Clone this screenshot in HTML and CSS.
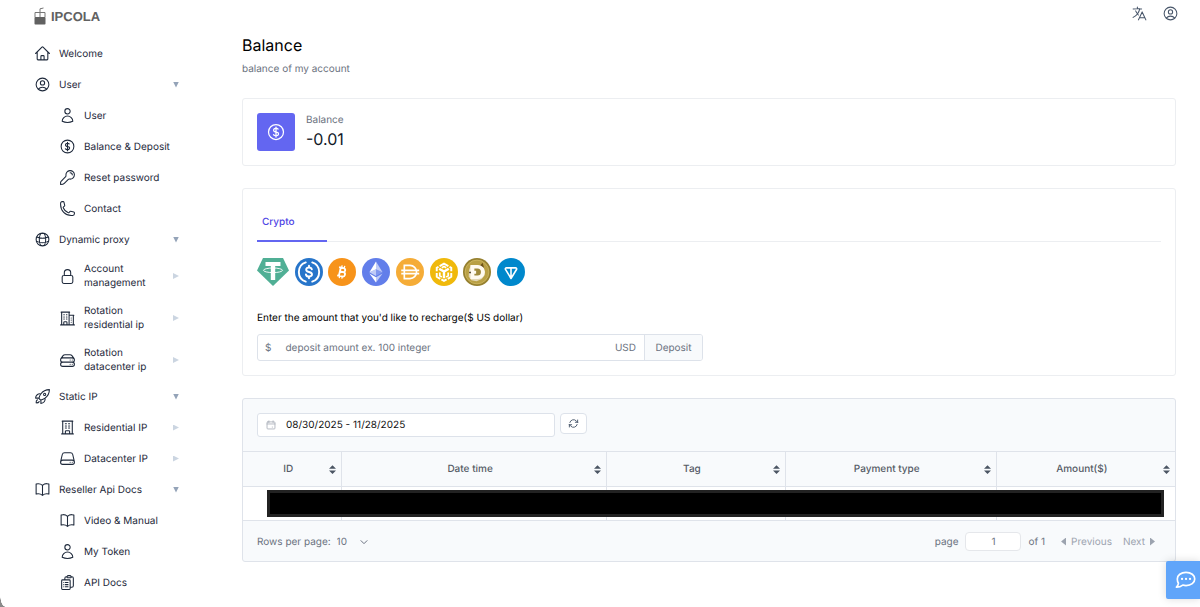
FILE: index.html
```html
<!DOCTYPE html>
<html lang="en">
<head>
  <meta charset="UTF-8" />
  <meta name="viewport" content="width=device-width, initial-scale=1" />
  <title>IPCOLA - Balance</title>
  <link rel="stylesheet" href="styles.css">
</head>
<body>
  <!-- icon set -->
  <svg class="sprite" aria-hidden="true">
    <symbol id="i-home" viewBox="0 0 24 24"><path d="M2.25 12l8.954-8.955c.44-.439 1.152-.439 1.591 0L21.75 12M4.5 9.75v10.125c0 .621.504 1.125 1.125 1.125H9.75v-4.875c0-.621.504-1.125 1.125-1.125h2.25c.621 0 1.125.504 1.125 1.125V21h4.125c.621 0 1.125-.504 1.125-1.125V9.75M8.25 21h8.25"/></symbol>
    <symbol id="i-user-circle" viewBox="0 0 24 24"><path d="M17.982 18.725A7.488 7.488 0 0012 15.75a7.488 7.488 0 00-5.982 2.975m11.963 0a9 9 0 10-11.963 0m11.963 0A8.966 8.966 0 0112 21a8.966 8.966 0 01-5.982-2.275M15 9.75a3 3 0 11-6 0 3 3 0 016 0z"/></symbol>
    <symbol id="i-user" viewBox="0 0 24 24"><path d="M15.75 6a3.75 3.75 0 11-7.5 0 3.75 3.75 0 017.5 0zM4.501 20.118a7.5 7.5 0 0114.998 0A17.933 17.933 0 0112 21.75c-2.676 0-5.216-.584-7.499-1.632z"/></symbol>
    <symbol id="i-dollar" viewBox="0 0 24 24"><path d="M12 6v12m-3-2.818l.879.659c1.171.879 3.07.879 4.242 0 1.172-.879 1.172-2.303 0-3.182C13.536 12.219 12.768 12 12 12c-.725 0-1.45-.22-2.003-.659-1.106-.879-1.106-2.303 0-3.182s2.9-.879 4.006 0l.415.33M21 12a9 9 0 11-18 0 9 9 0 0118 0z"/></symbol>
    <symbol id="i-key" viewBox="0 0 24 24"><path d="M15.750 5.250a3 3 0 013 3m3 0a6 6 0 01-7.029 5.912c-.563-.097-1.159.026-1.563.43L7.500 20.250c-1.200 1.200-3 1.500-5.250 1.500v-2.818c0-.597.237-1.170.659-1.591l6.499-6.499c.404-.404.527-1 .43-1.563A6 6 0 1121.750 8.250z"/></symbol>
    <symbol id="i-phone" viewBox="0 0 24 24"><path d="M2.25 6.75c0 8.284 6.716 15 15 15h2.25a2.25 2.25 0 002.25-2.25v-1.372c0-.516-.351-.966-.852-1.091l-4.423-1.106c-.44-.11-.902.055-1.173.417l-.97 1.293c-.282.376-.769.542-1.21.38a12.035 12.035 0 01-7.143-7.143c-.162-.441.004-.928.38-1.21l1.293-.97c.363-.271.527-.734.417-1.173L6.963 3.102a1.125 1.125 0 00-1.091-.852H4.5A2.25 2.25 0 002.25 4.5v2.25z"/></symbol>
    <symbol id="i-globe" viewBox="0 0 24 24"><path d="M12 3a9 9 0 100 18 9 9 0 000-18zm0 0c-2.5 0-4.5 4-4.5 9s2 9 4.5 9 4.5-4 4.5-9-2-9-4.5-9zM3.800 8.600c5 2 11.400 2 16.400 0M3.300 14.300c5.400 2.800 12 2.800 17.400 0"/></symbol>
    <symbol id="i-lock" viewBox="0 0 24 24"><path d="M16.5 10.5V6.75a4.5 4.5 0 10-9 0v3.75m-.75 11.25h10.5a2.25 2.25 0 002.25-2.25v-6.75a2.25 2.25 0 00-2.25-2.25H6.75a2.25 2.25 0 00-2.25 2.25v6.75a2.25 2.25 0 002.25 2.25z"/></symbol>
    <symbol id="i-buildings" viewBox="0 0 24 24"><path d="M2.25 21h19.5m-18-18v18m10.5-18v18m6-13.5V21M6.75 6.75h.75m-.75 3h.75m-.75 3h.75m3-6h.75m-.75 3h.75m-.75 3h.75M6.75 21v-3.375c0-.621.504-1.125 1.125-1.125h2.25c.621 0 1.125.504 1.125 1.125V21M3 3h12m-.75 4.5H21m-3.75 3.75h.008v.008h-.008v-.008zm0 3h.008v.008h-.008v-.008zm0 3h.008v.008h-.008v-.008z"/></symbol>
    <symbol id="i-building" viewBox="0 0 24 24"><path d="M3.75 21h16.5M4.5 3h15M5.25 3v18m13.5-18v18M9 6.75h1.5m-1.5 3h1.5m-1.5 3h1.5m3-6H15m-1.5 3H15m-1.5 3H15M9 21v-3.375c0-.621.504-1.125 1.125-1.125h3.75c.621 0 1.125.504 1.125 1.125V21"/></symbol>
    <symbol id="i-servers" viewBox="0 0 24 24"><path d="M5.25 14.25h13.5m-13.5 0a3 3 0 01-3-3m3 3a3 3 0 100 6h13.5a3 3 0 100-6m-16.5-3a3 3 0 013-3h13.5a3 3 0 013 3m-19.5 0a4.5 4.5 0 01.9-2.7L5.737 5.1a3.375 3.375 0 012.7-1.35h7.126c1.062 0 2.062.5 2.7 1.35l2.587 3.45a4.5 4.5 0 01.9 2.7m0 0a3 3 0 01-3 3m0 3h.008v.008h-.008v-.008zm0-6h.008v.008h-.008v-.008zm-3 6h.008v.008h-.008v-.008zm0-6h.008v.008h-.008v-.008z"/></symbol>
    <symbol id="i-server" viewBox="0 0 24 24"><path d="M21.75 17.25v-.228a4.5 4.5 0 00-.12-1.03l-2.268-9.64a3.375 3.375 0 00-3.285-2.602H7.923a3.375 3.375 0 00-3.285 2.602l-2.268 9.64a4.5 4.5 0 00-.12 1.03v.228m19.5 0a3 3 0 01-3 3H5.25a3 3 0 01-3-3m19.5 0a3 3 0 00-3-3H5.25a3 3 0 00-3 3m16.5 0h.008v.008h-.008v-.008zm-3 0h.008v.008h-.008v-.008z"/></symbol>
    <symbol id="i-rocket" viewBox="0 0 24 24"><path d="M15.59 14.37a6 6 0 01-5.84 7.38v-4.8m5.84-2.58a14.98 14.98 0 006.16-12.12A14.98 14.98 0 009.631 8.41m5.96 5.96a14.926 14.926 0 01-5.841 2.58m-.119-8.54a6 6 0 00-7.381 5.84h4.8m2.581-5.84a14.927 14.927 0 00-2.58 5.84m2.699 2.7c-.103.021-.207.041-.311.06a15.09 15.09 0 01-2.448-2.448 14.9 14.9 0 01.06-.312m-2.24 2.39a4.493 4.493 0 00-1.757 4.306 4.493 4.493 0 004.306-1.758M16.5 9a1.5 1.5 0 11-3 0 1.5 1.5 0 013 0z"/></symbol>
    <symbol id="i-book" viewBox="0 0 24 24"><path d="M12 6.042A8.967 8.967 0 006 3.75c-1.052 0-2.062.18-3 .512v14.25A8.987 8.987 0 016 18c2.305 0 4.408.867 6 2.292m0-14.25a8.966 8.966 0 016-2.292c1.052 0 2.062.18 3 .512v14.25A8.987 8.987 0 0018 18a8.967 8.967 0 00-6 2.292m0-14.25v14.25"/></symbol>
    <symbol id="i-clipboard" viewBox="0 0 24 24"><path d="M9 12h3.75M9 15h3.75M9 18h3.75m3 .75H18a2.25 2.25 0 002.25-2.25V6.108c0-1.135-.845-2.098-1.976-2.192a48.424 48.424 0 00-1.123-.08m-5.801 0c-.065.21-.1.433-.1.664 0 .414.336.75.75.75h4.5a.75.75 0 00.75-.75 2.25 2.25 0 00-.1-.664m-5.8 0A2.251 2.251 0 0113.5 2.25H15c1.012 0 1.867.668 2.15 1.586m-5.8 0c-.376.023-.75.05-1.124.08C9.095 4.01 8.25 4.973 8.25 6.108V8.25m0 0H4.875c-.621 0-1.125.504-1.125 1.125v11.25c0 .621.504 1.125 1.125 1.125h9.75c.621 0 1.125-.504 1.125-1.125V9.375c0-.621-.504-1.125-1.125-1.125H8.25zM6.75 12h.008v.008H6.75V12zm0 3h.008v.008H6.75V15zm0 3h.008v.008H6.75V18z"/></symbol>
    <symbol id="i-refresh" viewBox="0 0 24 24"><path d="M16.023 9.348h4.992v-.001M2.985 19.644v-4.992m0 0h4.992m-4.993 0l3.181 3.183a8.25 8.25 0 0013.803-3.7M4.031 9.865a8.25 8.25 0 0113.803-3.7l3.181 3.182m0-4.991v4.99"/></symbol>
    <symbol id="i-language" viewBox="0 0 24 24"><path d="M10.5 21l5.25-11.25L21 21m-9-3h7.5M3 5.621a48.474 48.474 0 016-.371m0 0c1.12 0 2.233.038 3.334.114M9 5.25V3m3.334 2.364C11.176 10.658 7.69 15.08 3 17.502m9.334-12.138c.896.061 1.785.147 2.666.257m-4.589 8.495a18.023 18.023 0 01-3.827-5.802"/></symbol>
    <symbol id="i-calendar" viewBox="0 0 24 24"><path d="M7 2v4M17 2v4M4.500 4.500h15a2 2 0 012 2V19.500a2 2 0 01-2 2h-15a2 2 0 01-2-2V6.500a2 2 0 012-2zM2.500 9.500h19M15 17h.5"/></symbol>
    <symbol id="i-chevron" viewBox="0 0 24 24"><path d="M3 8l9 9 9-9"/></symbol>
    <symbol id="i-sort" viewBox="0 0 8 10"><path d="M4 0l4 4H0zM0 6h8l-4 4z"/></symbol>
  </svg>

  <div class="layout">
    <aside class="sidebar">
      <a class="logo" href="#">
        <svg class="logo-mark" viewBox="0 0 12 18" aria-hidden="true">
          <path d="M1 10V5.500h10V10M6 10V1.800L9.500 1" fill="none" stroke="#777" stroke-width="1"/>
          <rect x="0.500" y="10" width="11" height="7.500" rx="0.800" fill="#616161"/>
        </svg>
        <span>IPCOLA</span>
      </a>

      <nav class="menu">
        <a class="menu-item" href="#"><svg class="icon"><use href="#i-home"/></svg><span>Welcome</span></a>

        <a class="menu-item" href="#"><svg class="icon"><use href="#i-user-circle"/></svg><span>User</span><i class="arrow-down"></i></a>
        <div class="submenu">
          <a class="menu-item" href="#"><svg class="icon"><use href="#i-user"/></svg><span>User</span></a>
          <a class="menu-item" href="#"><svg class="icon"><use href="#i-dollar"/></svg><span>Balance &amp; Deposit</span></a>
          <a class="menu-item" href="#"><svg class="icon"><use href="#i-key"/></svg><span>Reset password</span></a>
          <a class="menu-item" href="#"><svg class="icon"><use href="#i-phone"/></svg><span>Contact</span></a>
        </div>

        <a class="menu-item" href="#"><svg class="icon"><use href="#i-globe"/></svg><span>Dynamic proxy</span><i class="arrow-down"></i></a>
        <div class="submenu">
          <a class="menu-item" href="#"><svg class="icon"><use href="#i-lock"/></svg><span>Account management</span><i class="arrow-right"></i></a>
          <a class="menu-item" href="#"><svg class="icon"><use href="#i-buildings"/></svg><span>Rotation residential ip</span><i class="arrow-right"></i></a>
          <a class="menu-item" href="#"><svg class="icon"><use href="#i-servers"/></svg><span>Rotation datacenter ip</span><i class="arrow-right"></i></a>
        </div>

        <a class="menu-item" href="#"><svg class="icon"><use href="#i-rocket"/></svg><span>Static IP</span><i class="arrow-down"></i></a>
        <div class="submenu">
          <a class="menu-item" href="#"><svg class="icon"><use href="#i-building"/></svg><span>Residential IP</span><i class="arrow-right"></i></a>
          <a class="menu-item" href="#"><svg class="icon"><use href="#i-server"/></svg><span>Datacenter IP</span><i class="arrow-right"></i></a>
        </div>

        <a class="menu-item" href="#"><svg class="icon"><use href="#i-book"/></svg><span>Reseller Api Docs</span><i class="arrow-down"></i></a>
        <div class="submenu">
          <a class="menu-item" href="#"><svg class="icon"><use href="#i-book"/></svg><span>Video &amp; Manual</span></a>
          <a class="menu-item" href="#"><svg class="icon"><use href="#i-user"/></svg><span>My Token</span></a>
          <a class="menu-item" href="#"><svg class="icon"><use href="#i-clipboard"/></svg><span>API Docs</span></a>
        </div>
      </nav>
    </aside>

    <main class="content">
      <header class="topbar">
        <button type="button" class="icon-btn" aria-label="Language"><svg class="icon"><use href="#i-language"/></svg></button>
        <button type="button" class="icon-btn" aria-label="Account"><svg class="icon"><use href="#i-user-circle"/></svg></button>
      </header>

      <h1 class="page-title">Balance</h1>
      <p class="page-desc">balance of my account</p>

      <section class="card balance-card">
        <div class="balance-icon"><svg class="icon"><use href="#i-dollar"/></svg></div>
        <div>
          <div class="balance-label">Balance</div>
          <div class="balance-value">-0.01</div>
        </div>
      </section>

      <section class="card deposit-card">
        <div class="tabs">
          <button type="button" class="tab">Crypto</button>
        </div>

        <div class="coins">
          <!-- USDT -->
          <svg class="coin coin-wide" viewBox="0 0 32 28">
            <path d="M6 0h20l6 12.500L16 28 0 12.500z" fill="#50af95"/>
            <path d="M8.500 4h15v4h-5.300v14h-4.400V8H8.500z" fill="#fff"/>
            <ellipse cx="16" cy="12.300" rx="9.500" ry="2.300" fill="none" stroke="#fff" stroke-width="0.900"/>
          </svg>
          <!-- USDC -->
          <svg class="coin" viewBox="0 0 32 32">
            <circle cx="16" cy="16" r="16" fill="#2775ca"/>
            <g fill="none" stroke="#fff" stroke-width="2.200" stroke-linecap="round">
              <path d="M12.300 5a11.600 11.600 0 000 22M19.700 5a11.600 11.600 0 010 22"/>
              <path d="M19.200 13c-.3-1.400-1.400-2.100-3.200-2.100-1.900 0-3.200.9-3.200 2.400 0 3.600 6.600 1.800 6.600 5.400 0 1.500-1.300 2.500-3.400 2.500-2 0-3.200-.8-3.500-2.400M16 8.800v2M16 21.200v2"/>
            </g>
          </svg>
          <!-- BTC -->
          <svg class="coin" viewBox="0 0 32 32">
            <circle cx="16" cy="16" r="16" fill="#f7931a"/>
            <g transform="rotate(13 16 16)" fill="none" stroke="#fff" stroke-width="2.100">
              <path d="M11.500 11.200h5.300a2.300 2.300 0 010 4.700h-3.500M13.500 11v10M13.500 15.900h4a2.500 2.500 0 010 5h-6"/>
              <path d="M14.500 8.500v2.500M17.500 8.500v2.500M14.500 21v2.500M17.500 21v2.500" stroke-width="1.500"/>
            </g>
          </svg>
          <!-- ETH -->
          <svg class="coin" viewBox="0 0 32 32">
            <circle cx="16" cy="16" r="16" fill="#627eea"/>
            <g fill="#fff">
              <path fill-opacity=".6" d="M16 4v8.870l7.500 3.350z"/>
              <path d="M16 4L8.500 16.220l7.500-3.350z"/>
              <path fill-opacity=".6" d="M16 21.970v6.030l7.500-10.380z"/>
              <path d="M16 28v-6.030l-7.500-4.350z"/>
              <path fill-opacity=".2" d="M16 20.570l7.500-4.350-7.500-3.350z"/>
              <path fill-opacity=".6" d="M8.500 16.220l7.500 4.350v-7.700z"/>
            </g>
          </svg>
          <!-- DAI -->
          <svg class="coin" viewBox="0 0 32 32">
            <circle cx="16" cy="16" r="16" fill="#f5ac37"/>
            <path d="M9.500 8.500h6.500a7.500 7.500 0 010 15H9.500zM6 14.200h20.500M6 17.800h20.500" fill="none" stroke="#fff" stroke-width="1.900"/>
          </svg>
          <!-- BNB -->
          <svg class="coin" viewBox="0 0 32 32">
            <circle cx="16" cy="16" r="16" fill="#f0b90b"/>
            <g fill="none" stroke="#fff" stroke-width="2.200">
              <path d="M11 9.300L16 6.500l5 2.800M7.700 15v-3.800l2-1.200M24.300 15v-3.800l-2-1.200M7.700 17.200v4.300l4 2.300M24.300 17.200v4.300l-4 2.300M13 24.500l3 1.700 3-1.700"/>
              <path d="M10.500 12.300l5.500 3.200 5.500-3.200M16 15.500v7.500" stroke-width="2.800"/>
              <path d="M11.200 16.500v3.800l2.300 1.300M20.800 16.500v3.800l-2.300 1.300M13.500 11.200l2.500-1.400 2.500 1.400" stroke-width="2"/>
            </g>
          </svg>
          <!-- DOGE -->
          <svg class="coin" viewBox="0 0 32 32">
            <circle cx="16" cy="16" r="16" fill="#96802f"/>
            <circle cx="16" cy="16" r="13.600" fill="#b9a045" stroke="#d5be6a" stroke-width="0.800"/>
            <path d="M9 8.500l3.500 1 7-.5 4 2 1.500 5-.5 4-3 4-6 2.500-6-1L6.500 21 7 13z" fill="#e3d7b4"/>
            <path d="M19 9l3.500-3.500L24 11z" fill="#6f5318"/>
            <path d="M8.500 8h8.500a8 8 0 010 16H8.500v-5.500H7v-4h1.500z" fill="#fffaf0"/>
            <path d="M13 12h3.500a4 4 0 010 8H13v-2h2v-3.500h-2z" fill="#a08a3c"/>
            <circle cx="8" cy="16.500" r="1.100" fill="#4b3b1c"/>
          </svg>
          <!-- TON -->
          <svg class="coin" viewBox="0 0 32 32">
            <circle cx="16" cy="16" r="16" fill="#0088cc"/>
            <path d="M10.800 11.300h10.400c1 0 1.600 1 1.100 1.800L16 23.400 9.700 13.100c-.5-.8.1-1.800 1.100-1.800zM16 11.300v11.500" fill="none" stroke="#fff" stroke-width="1.800" stroke-linejoin="round"/>
          </svg>
        </div>

        <label class="deposit-label" for="amount">Enter the amount that you'd like to recharge($ US dollar)</label>
        <div class="input-group">
          <span class="prefix">$</span>
          <input type="text" id="amount" placeholder="deposit amount ex. 100 integer">
          <span class="suffix">USD</span>
          <button type="button" class="deposit-btn">Deposit</button>
        </div>
      </section>

      <section class="card table-card">
        <div class="toolbar">
          <div class="date-box">
            <svg class="icon"><use href="#i-calendar"/></svg>
            <input type="text" aria-label="Date range" value="08/30/2025 - 11/28/2025">
          </div>
          <button type="button" class="refresh-btn" aria-label="Refresh"><svg class="icon"><use href="#i-refresh"/></svg></button>
        </div>

        <div class="table-wrap">
          <table class="history">
            <colgroup>
              <col class="col-id"><col class="col-date"><col class="col-tag"><col class="col-type"><col class="col-amount">
            </colgroup>
            <thead>
              <tr>
                <th><div class="th"><span>ID</span><svg class="sort"><use href="#i-sort"/></svg></div></th>
                <th><div class="th"><span>Date time</span><svg class="sort"><use href="#i-sort"/></svg></div></th>
                <th><div class="th"><span>Tag</span><svg class="sort"><use href="#i-sort"/></svg></div></th>
                <th><div class="th"><span>Payment type</span><svg class="sort"><use href="#i-sort"/></svg></div></th>
                <th><div class="th"><span>Amount($)</span><svg class="sort"><use href="#i-sort"/></svg></div></th>
              </tr>
            </thead>
            <tbody>
              <tr><td></td><td></td><td></td><td></td><td></td></tr>
            </tbody>
          </table>
          <div class="row-mask"></div>
        </div>

        <div class="table-footer">
          <div class="rows">
            <label for="rows">Rows per page:</label>
            <div class="select-box">
              <select id="rows"><option>10</option><option>20</option><option>50</option></select>
              <svg class="icon"><use href="#i-chevron"/></svg>
            </div>
          </div>
          <div class="pager">
            <label for="page">page</label>
            <input type="text" id="page" value="1">
            <span class="total">of 1</span>
            <button type="button" class="pager-btn"><i class="tri-left"></i>Previous</button>
            <button type="button" class="pager-btn">Next<i class="tri-right"></i></button>
          </div>
        </div>
      </section>
    </main>
  </div>

  <button type="button" class="chat-btn" aria-label="Chat">
    <svg viewBox="0 0 20 17" aria-hidden="true">
      <path d="M10.500 1.200c4.800 0 8.300 2.800 8.300 6.300s-3.500 6.300-8.300 6.300c-1.200 0-2.200-.2-3.100-.5-1.500 1.200-3.400 2-6 2 1.100-1.100 1.700-2.300 1.900-3.700C2.500 10.500 2.200 9 2.200 7.500c0-3.500 3.500-6.300 8.300-6.300z" fill="none" stroke="#fff" stroke-width="1.600" stroke-linejoin="round"/>
      <path d="M6.700 7.500h.01M10.500 7.500h.01M14.300 7.500h.01" stroke="#fff" stroke-width="2.200" stroke-linecap="round"/>
    </svg>
  </button>
  <div class="window-corner"></div>
</body>
</html>
```

FILE: styles.css
```css
* {
  box-sizing: border-box;
  margin: 0;
  padding: 0;
}

body {
  font-family: Inter, sans-serif;
  font-size: 10px;
  line-height: 14px;
  color: #1e293b;
  background: #fff;
  text-rendering: geometricPrecision;
}

a {
  color: inherit;
  text-decoration: none;
}

button, input, select {
  font: inherit;
  color: inherit;
  background: none;
  border: none;
  outline: none;
  text-rendering: inherit;
}

button {
  cursor: pointer;
}

.sprite {
  display: none;
}

.icon {
  flex: none;
  width: 17px;
  height: 17px;
  fill: none;
  stroke: currentColor;
  stroke-width: 1.5;
  stroke-linecap: round;
  stroke-linejoin: round;
}

.layout {
  display: grid;
  grid-template-columns: 242px 1fr;
  min-height: 100vh;
}

/* sidebar */
.sidebar {
  padding: 6px 63px 8px 34px;
}

.logo {
  display: flex;
  align-items: center;
  gap: 5px;
  height: 20px;
  margin-bottom: 12px;
  font-family: "Liberation Sans", Arial, sans-serif;
  font-size: 13px;
  font-weight: bold;
  color: #616161;
}

.logo-mark {
  width: 12px;
  height: 18px;
}

.logo span {
  padding-top: 2px;
}

.menu-item {
  display: flex;
  align-items: center;
  gap: 8px;
  padding: 7px 0;
}

.menu-item span {
  flex: 1;
}

.submenu {
  padding-left: 25px;
}

.arrow-down,
.arrow-right {
  flex: none;
  width: 6px;
  height: 6px;
  background: #94a3b8;
  clip-path: polygon(0 0, 100% 0, 50% 100%);
}

.arrow-right {
  background: #cbd5e1;
  clip-path: polygon(0 0, 100% 50%, 0 100%);
}

/* content */
.content {
  padding: 5px 24px 24px 0;
}

.topbar {
  display: flex;
  justify-content: flex-end;
  gap: 14px;
  margin-right: -3px;
  color: #475569;
}

.icon-btn {
  display: flex;
}

.page-title {
  margin-top: 12px;
  font-size: 16px;
  font-weight: 400;
  line-height: 22px;
  color: #000;
}

.page-desc {
  margin: 6px 0 22px;
  color: #6b7280;
}

.card {
  border: 1px solid #eceef1;
  border-radius: 3px;
  margin-bottom: 22px;
}

.balance-card {
  display: flex;
  align-items: center;
  gap: 11px;
  padding: 14px;
}

.balance-icon {
  display: flex;
  align-items: center;
  justify-content: center;
  width: 38px;
  height: 38px;
  border-radius: 3px;
  background: #6366f1;
  color: #fff;
}

.balance-icon .icon {
  width: 20px;
  height: 20px;
}

.balance-label {
  color: #6b7280;
}

.balance-value {
  font-size: 16px;
  line-height: 24px;
  color: #111827;
}

.deposit-card {
  padding: 14px;
}

.tabs {
  border-bottom: 1px solid #eceef1;
  display: flex;
}

.tab {
  width: 70px;
  padding: 12px 5px 11px;
  margin-bottom: -1px;
  border-bottom: 2px solid #6366f1;
  text-align: left;
  font-weight: 500;
  color: #4f46e5;
}

.coins {
  display: flex;
  justify-content: space-between;
  width: 268px;
  margin: 16px 0 25px;
}

.coin {
  width: 28px;
  height: 28px;
}

.coin-wide {
  width: 32px;
}

.deposit-label {
  display: block;
  margin-bottom: 9px;
  color: #000;
}

.input-group {
  display: flex;
  align-items: center;
  width: 446px;
  max-width: 100%;
  height: 27px;
  border: 1px solid #dde2ea;
  border-radius: 3px;
  color: #6b7280;
  overflow: hidden;
}

.prefix {
  padding: 0 14px 0 7px;
}

.input-group input {
  flex: 1;
  min-width: 0;
  height: 100%;
}

.input-group input::placeholder {
  color: #6b7280;
  opacity: 1;
}

.suffix {
  padding: 0 8px;
}

.deposit-btn {
  width: 58px;
  height: 100%;
  border-left: 1px solid #dde2ea;
  background: #f8fafc;
}

/* table */
.table-card {
  border-color: #dfe3ea;
  background: #f8fafc;
}

.toolbar {
  display: flex;
  align-items: flex-start;
  gap: 5px;
  padding: 14px;
}

.date-box {
  display: flex;
  align-items: center;
  gap: 10px;
  width: 298px;
  height: 24px;
  padding: 0 8px;
  border: 1px solid #dde2ea;
  border-radius: 3px;
  background: #fff;
}

.date-box .icon {
  width: 10px;
  height: 10px;
  stroke-width: 2;
  color: #a8adb8;
}

.date-box input {
  flex: 1;
  min-width: 0;
  color: #111;
}

.refresh-btn {
  display: flex;
  align-items: center;
  justify-content: center;
  width: 27px;
  height: 21px;
  border: 1px solid #dde2ea;
  border-radius: 4px;
  background: #fff;
  color: #475569;
}

.refresh-btn .icon {
  width: 11px;
  height: 11px;
  stroke-width: 2;
}

.table-wrap {
  position: relative;
}

.history {
  width: 100%;
  table-layout: fixed;
  border-collapse: collapse;
}

.col-id { width: 10.6%; }
.col-date { width: 28.4%; }
.col-tag { width: 19.2%; }
.col-type { width: 22.6%; }
.col-amount { width: 19.2%; }

.history th,
.history td {
  height: 34px;
  border: 1px solid #dfe3ea;
}

.history th {
  height: 35px;
  font-weight: 500;
  color: #555b66;
}

.history td {
  background: #fff;
}

.history th:first-child,
.history td:first-child {
  border-left: none;
}

.history th:last-child,
.history td:last-child {
  border-right: none;
}

.th {
  display: flex;
  align-items: center;
  padding: 0 5px 0 4px;
}

.th span {
  flex: 1;
  text-align: center;
}

.sort {
  width: 7px;
  height: 9px;
  fill: #4b5563;
}

/* hidden row data */
.row-mask {
  position: absolute;
  left: 24px;
  right: 11px;
  bottom: 4px;
  height: 27px;
  border: 3px solid #222;
  background: #000;
}

.table-footer {
  display: flex;
  align-items: center;
  justify-content: space-between;
  padding: 11px 20px 10px 14px;
  color: #6b7280;
}

.rows,
.pager {
  display: flex;
  align-items: center;
}

.rows {
  gap: 6px;
}

.select-box {
  display: flex;
  align-items: center;
}

.select-box select {
  appearance: none;
  width: 31px;
  margin-right: -8px;
  padding-right: 8px;
}

.select-box .icon {
  width: 8px;
  height: 8px;
  stroke-width: 3;
  pointer-events: none;
}

.pager input {
  width: 56px;
  height: 19px;
  margin: 0 7px;
  border: 1px solid #e5e7eb;
  border-radius: 4px;
  background: #fff;
  text-align: center;
}

.total {
  margin-right: 16px;
}

.pager-btn {
  display: flex;
  align-items: center;
  gap: 5px;
  color: #9ca3af;
}

.pager-btn + .pager-btn {
  margin-left: 11px;
}

.tri-left,
.tri-right {
  width: 5px;
  height: 8px;
  background: #9ca3af;
  clip-path: polygon(100% 0, 100% 100%, 0 50%);
}

.tri-right {
  clip-path: polygon(0 0, 100% 50%, 0 100%);
}

.chat-btn {
  position: fixed;
  right: 0;
  bottom: 8px;
  display: flex;
  align-items: center;
  width: 34px;
  height: 38px;
  padding-left: 9px;
  border-radius: 2px 0 0 2px;
  background: #60a5fa;
  box-shadow: 0 0 8px rgba(0, 0, 0, 0.15);
}

.chat-btn svg {
  width: 21px;
  height: 18px;
}

.window-corner {
  position: fixed;
  left: 0;
  bottom: 0;
  width: 5px;
  height: 12px;
  background: radial-gradient(ellipse 5px 12px at 100% 0, transparent 92%, #8a8a8a 100%);
}
```
